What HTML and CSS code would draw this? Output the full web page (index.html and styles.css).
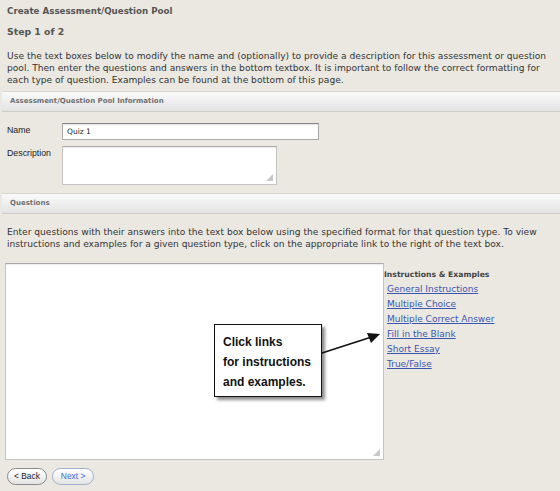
FILE: index.html
```html
<!DOCTYPE html>
<html>
<head>
<meta charset="utf-8">
<link rel="stylesheet" href="styles.css">
</head>
<body>
<div class="page">
  <h1 class="title">Create Assessment/Question Pool</h1>
  <h2 class="step">Step 1 of 2</h2>
  <p class="intro">Use the text boxes below to modify the name and (optionally) to provide a description for this assessment or question<br>pool. Then enter the questions and answers in the bottom textbox. It is important to follow the correct formatting for<br>each type of question. Examples can be found at the bottom of this page.</p>
  <div class="bar">Assessment/Question Pool Information</div>
  <div class="form">
    <div class="row">
      <span class="label">Name</span>
      <div class="input">Quiz 1</div>
    </div>
    <div class="row">
      <span class="label">Description</span>
      <div class="textarea desc"><span class="grip"></span></div>
    </div>
  </div>
  <div class="bar">Questions</div>
  <p class="intro q">Enter questions with their answers into the text box below using the specified format for that question type. To view<br>instructions and examples for a given question type, click on the appropriate link to the right of the text box.</p>
  <div class="qarea">
    <div class="textarea big"><span class="grip"></span></div>
    <div class="links">
      <div class="links-title">Instructions &amp; Examples</div>
      <a href="#">General Instructions</a>
      <a href="#">Multiple Choice</a>
      <a href="#">Multiple Correct Answer</a>
      <a href="#">Fill in the Blank</a>
      <a href="#">Short Essay</a>
      <a href="#">True/False</a>
    </div>
  </div>
  <div class="buttons">
    <span class="btn">&lt; Back</span>
    <span class="btn next">Next &gt;</span>
  </div>

  <div class="callout">Click links<br>for instructions<br>and examples.</div>
  <svg class="arrow" width="64" height="30" viewBox="0 0 64 30">
    <line x1="2" y1="24" x2="50" y2="8.5" stroke="#111" stroke-width="1.6"/>
    <polygon points="60,5 47,4 51,14" fill="#111"/>
  </svg>
</div>
</body>
</html>
```

FILE: styles.css
```css
html, body {
  margin: 0;
  padding: 0;
  background: #ebe8e1;
}
.page {
  position: relative;
  width: 560px;
  height: 491px;
  overflow: hidden;
  font-family: "DejaVu Sans", Verdana, sans-serif;
  color: #333;
}
.title {
  margin: 0;
  padding: 5px 0 0 7px;
  font-size: 8.7px;
  line-height: 12px;
  font-weight: bold;
  color: #555;
}
.step {
  margin: 9px 0 0 7px;
  font-size: 9.3px;
  line-height: 12px;
  font-weight: bold;
  color: #555;
}
.intro {
  margin: 12px 0 0 7px;
  font-size: 9.1px;
  line-height: 12px;
  color: #333;
}
.bar {
  margin: 5px 0 0 2px;
  height: 19px;
  line-height: 19px;
  padding-left: 8px;
  border-top: 1px solid #d8d6d0;
  border-bottom: 1px solid #cfcdc8;
  background: linear-gradient(#fafafa, #e3e3e3);
  font-family: "DejaVu Sans", sans-serif;
  font-size: 7px;
  font-weight: bold;
  color: #707070;
}
.form {
  padding: 11px 0 3px 7px;
  display: flex;
  flex-direction: column;
  gap: 6px;
}
.row {
  display: flex;
  align-items: flex-start;
}
.label {
  width: 55px;
  font-family: "Liberation Sans", Arial, sans-serif;
  font-size: 8.8px;
  line-height: 12px;
  color: #222;
  padding-top: 1px;
}
.input {
  width: 251px;
  height: 15px;
  background: #fff;
  border: 1px solid #aaa;
  border-top-color: #888;
  box-shadow: inset 0 1px 1px rgba(0,0,0,0.12);
  font-size: 7.5px;
  line-height: 15px;
  padding-left: 4px;
  color: #222;
}
.textarea {
  position: relative;
  background: #fff;
  border: 1px solid #c4c4c4;
  border-top-color: #aaa;
  box-shadow: inset 0 1px 1px rgba(0,0,0,0.08);
}
.desc {
  width: 213px;
  height: 37px;
}
.grip {
  position: absolute;
  right: 3px;
  bottom: 3px;
  width: 0;
  height: 0;
  border-left: 7px solid transparent;
  border-bottom: 7px solid #c8c8c8;
}
.intro.q {
  margin-top: 12px;
}
.qarea {
  display: flex;
  margin: 13px 0 0 5px;
}
.big {
  width: 377px;
  height: 195px;
}
.links {
  display: flex;
  flex-direction: column;
  padding-top: 5px;
  font-size: 9px;
  line-height: 15px;
}
.links-title {
  font-weight: bold;
  color: #444;
  font-size: 7.7px;
  line-height: 14px;
}
.links a {
  color: #3a56b0;
  text-decoration: underline;
  padding-left: 3px;
  line-height: 14.9px;
}
.buttons {
  display: flex;
  gap: 5px;
  margin: 8px 0 0 7px;
}
.btn {
  display: inline-block;
  height: 15px;
  line-height: 15px;
  padding: 0 6px;
  border: 1px solid #8a8a8a;
  border-radius: 9px;
  background: linear-gradient(#ffffff, #e4e4e4);
  font-family: "Liberation Sans", Arial, sans-serif;
  font-size: 8.4px;
  color: #222;
}
.btn.next {
  color: #3a6ad8;
  border-color: #9fb0cc;
  padding: 0 8px;
}
.callout {
  position: absolute;
  left: 214px;
  top: 324px;
  padding: 7px 0 0 8px;
  box-sizing: border-box;
  width: 108px;
  height: 73px;
  background: #fff;
  border: 1.5px solid #111;
  box-shadow: 3px 3px 3px rgba(0,0,0,0.45);
  font-family: "Liberation Sans", Arial, sans-serif;
  font-weight: bold;
  font-size: 12px;
  line-height: 20px;
  color: #111;
}
.arrow {
  position: absolute;
  left: 320px;
  top: 329px;
}
```
